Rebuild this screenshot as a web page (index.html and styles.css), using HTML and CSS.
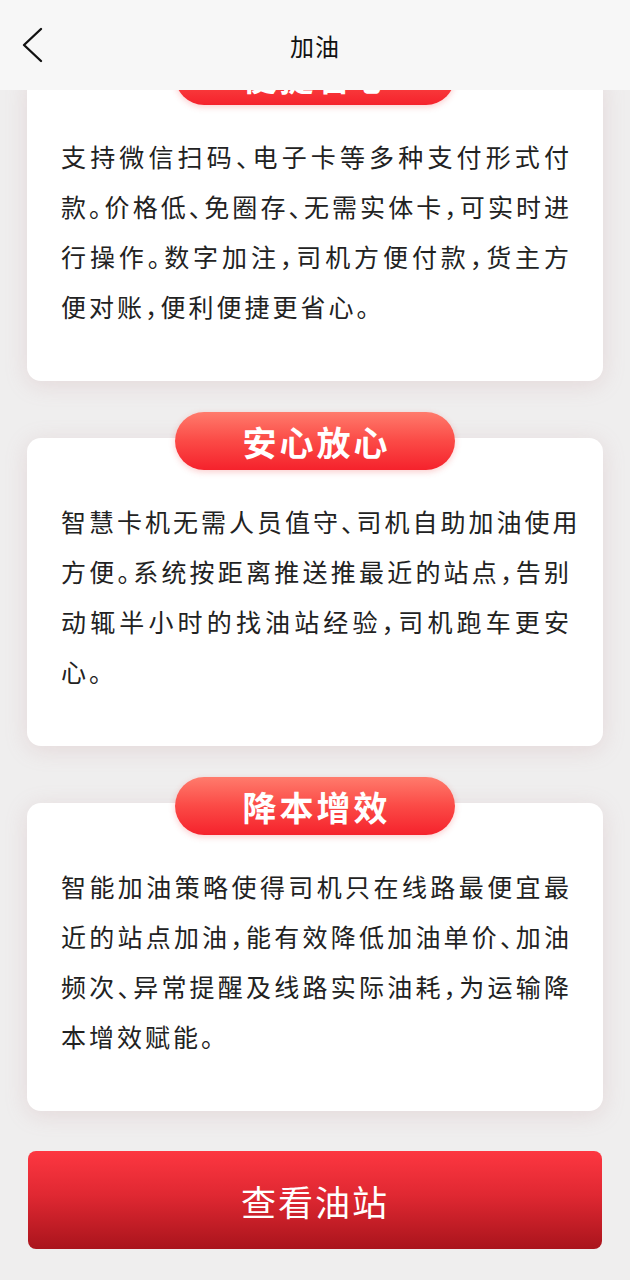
FILE: index.html
```html
<!DOCTYPE html>
<html lang="zh-CN">
<head>
<meta charset="utf-8">
<title>加油</title>
<link rel="stylesheet" href="styles.css">
</head>
<body>
<header class="topbar">
  <span class="back">
    <svg width="26" height="36" viewBox="0 0 26 36"><polyline points="21,2 4,18 21,34" fill="none" stroke="#111" stroke-width="2.4" stroke-linecap="round" stroke-linejoin="round"/></svg>
  </span>
  <h1 class="title">加油</h1>
</header>
<main class="viewport">
  <div class="content">
    <section class="card first">
      <div class="badge">便捷省心</div>
      <p class="desc">
        <span class="ln">支持微信扫码、电子卡等多种支付形式付</span>
        <span class="ln">款。价格低、免圈存、无需实体卡，可实时进</span>
        <span class="ln">行操作。数字加注，司机方便付款，货主方</span>
        <span class="ln end">便对账，便利便捷更省心。</span>
      </p>
    </section>
    <section class="card">
      <div class="badge">安心放心</div>
      <p class="desc">
        <span class="ln">智慧卡机无需人员值守、司机自助加油使用</span>
        <span class="ln">方便。系统按距离推送推最近的站点，告别</span>
        <span class="ln">动辄半小时的找油站经验，司机跑车更安</span>
        <span class="ln end">心。</span>
      </p>
    </section>
    <section class="card">
      <div class="badge">降本增效</div>
      <p class="desc">
        <span class="ln">智能加油策略使得司机只在线路最便宜最</span>
        <span class="ln">近的站点加油，能有效降低加油单价、加油</span>
        <span class="ln">频次、异常提醒及线路实际油耗，为运输降</span>
        <span class="ln end">本增效赋能。</span>
      </p>
    </section>
    <button class="cta" type="button">查看油站</button>
  </div>
</main>
</body>
</html>
```
FILE: styles.css
```css
* { box-sizing: border-box; }
html, body { margin: 0; padding: 0; }
body {
  background: #efeeee;
  font-family: "Noto Sans CJK SC", "Noto Sans", sans-serif;
  width: 630px;
  height: 1280px;
  overflow: hidden;
}
.topbar {
  position: relative;
  width: 630px;
  height: 90px;
  background: #f7f7f7;
  z-index: 10;
  display: flex;
  align-items: center;
  justify-content: center;
}
.back {
  position: absolute;
  left: 20px;
  top: 27px;
  width: 26px;
  height: 36px;
  display: block;
}
.back svg { display: block; }
.title {
  margin: 0;
  font-size: 24px;
  font-weight: 400;
  color: #111;
  letter-spacing: 1px;
}
.viewport {
  height: 1190px;
  overflow: hidden;
}
.content {
  padding: 0 27px;
  display: flex;
  flex-direction: column;
  gap: 57px;
}
.card {
  position: relative;
  background: #fff;
  border-radius: 14px;
  height: 308px;
  padding: 58px 31px 50px 34px;
  box-shadow: 0 4px 22px rgba(190, 140, 145, 0.22);
}
.card.first { margin-top: -17px; }
.badge {
  position: absolute;
  top: -26px;
  left: 0; right: 0;
  margin: 0 auto;
  width: 280px;
  height: 58px;
  border-radius: 29px;
  background: linear-gradient(180deg, #ff7b6c 0%, #fb4a46 50%, #f5222c 100%);
  box-shadow: 0 2px 6px rgba(240, 60, 60, 0.25);
  color: #fff;
  font-size: 34px;
  font-weight: 700;
  letter-spacing: 3px;
  display: flex;
  align-items: center;
  justify-content: center;
  padding-left: 3px;
}
.desc {
  margin: 0;
  font-size: 25px;
  line-height: 50px;
  color: #222;
  letter-spacing: 3px;
  font-feature-settings: "halt";
}
.ln {
  display: block;
  text-align: justify;
  text-align-last: justify;
  white-space: nowrap;
}
.ln.end { text-align-last: left; }
.cta {
  margin-top: -17px;
  width: 574px;
  height: 98px;
  border: 0;
  border-radius: 8px;
  background: linear-gradient(180deg, #fd3741 0%, #e02832 45%, #a9141c 100%);
  color: #fff;
  font-family: "Noto Sans CJK SC", "Noto Sans", sans-serif;
  font-size: 35px;
  font-weight: 400;
  letter-spacing: 2px;
  padding: 0;
  align-self: center;
}
```
